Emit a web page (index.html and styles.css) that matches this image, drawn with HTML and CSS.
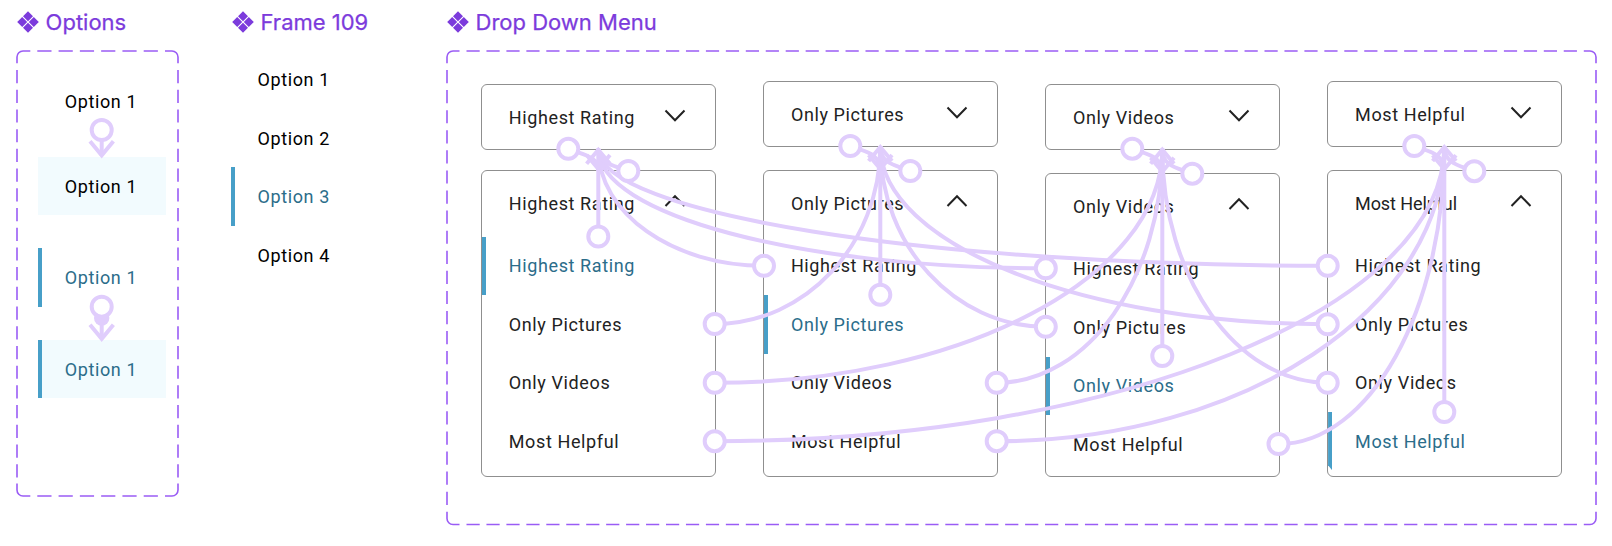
FILE: index.html
```html
<!DOCTYPE html>
<html lang="en">
<head>
<meta charset="utf-8">
<title>Drop Down Menu components</title>
<link rel="stylesheet" href="styles.css">
</head>
<body>
<svg class="defs" width="0" height="0">
  <symbol id="component" viewBox="0 0 22 22"><path d="M11 .2l5 5-5 5-5-5zM11 11.8l5 5-5 5-5-5zM5.2 6l5 5-5 5-5-5zM16.8 6l5 5-5 5-5-5z"/></symbol>
  <symbol id="down" viewBox="0 0 22 14"><path d="M1.5 1.5L11 11.3L20.5 1.5"/></symbol>
  <symbol id="up" viewBox="0 0 22 14"><path d="M1.5 12L11 2.2L20.5 12"/></symbol>
</svg>
<main class="canvas">
  <section class="set set-options">
    <h2 class="title"><svg class="mark"><use href="#component"/></svg>Options</h2>
    <div class="frame frame-options">
      <svg class="dashes" width="164" height="448">
        <path d="M1 13.3V7a6 6 0 0 1 6-6h7.3M149 1h7a6 6 0 0 1 6 6v6.3M162 433.5v6.5a6 6 0 0 1-6 6h-7M14.3 446H7a6 6 0 0 1-6-6v-6.5"/>
        <path class="dash-h" d="M21.3 1H148M21.3 446H148"/>
        <path class="dash-v" d="M1 20V433M162 20V433"/>
      </svg>
      <div class="option">Option 1</div>
      <div class="option hover gap-a">Option 1</div>
      <div class="option selected gap-b">Option 1</div>
      <div class="option selected hover gap-b">Option 1</div>
    </div>
  </section>

  <section class="set set-list">
    <h2 class="title"><svg class="mark"><use href="#component"/></svg>Frame 109</h2>
    <div class="list">
      <div class="option">Option 1</div>
      <div class="option">Option 2</div>
      <div class="option selected">Option 3</div>
      <div class="option">Option 4</div>
    </div>
  </section>

  <section class="set set-menus">
    <h2 class="title"><svg class="mark"><use href="#component"/></svg>Drop Down Menu</h2>
    <div class="frame frame-menus">
      <svg class="dashes" width="1152" height="476">
        <path d="M1 13.3V7a6 6 0 0 1 6-6h6.5M1137.8 1h6.2a6 6 0 0 1 6 6v6.3M1150 461.7v6.8a6 6 0 0 1-6 6h-6.2M13.5 474.5H7a6 6 0 0 1-6-6v-6.8"/>
        <path class="dash-wide" d="M20.5 1H1137M20.5 474.5H1137"/>
        <path class="dash-tall" d="M1 20V461M1150 20V461"/>
      </svg>
      <div class="column low">
        <div class="card head">Highest Rating<svg class="chev"><use href="#down"/></svg></div>
        <div class="card menu">
          <div class="head">Highest Rating<svg class="chev"><use href="#up"/></svg></div>
          <div class="item selected">Highest Rating</div>
          <div class="item">Only Pictures</div>
          <div class="item">Only Videos</div>
          <div class="item">Most Helpful</div>
        </div>
      </div>
      <div class="column">
        <div class="card head">Only Pictures<svg class="chev"><use href="#down"/></svg></div>
        <div class="card menu">
          <div class="head">Only Pictures<svg class="chev"><use href="#up"/></svg></div>
          <div class="item">Highest Rating</div>
          <div class="item selected">Only Pictures</div>
          <div class="item">Only Videos</div>
          <div class="item">Most Helpful</div>
        </div>
      </div>
      <div class="column low far">
        <div class="card head">Only Videos<svg class="chev"><use href="#down"/></svg></div>
        <div class="card menu">
          <div class="head">Only Videos<svg class="chev"><use href="#up"/></svg></div>
          <div class="item">Highest Rating</div>
          <div class="item">Only Pictures</div>
          <div class="item selected">Only Videos</div>
          <div class="item">Most Helpful</div>
        </div>
      </div>
      <div class="column">
        <div class="card head">Most Helpful<svg class="chev"><use href="#down"/></svg></div>
        <div class="card menu">
          <div class="head tight">Most Helpful<svg class="chev"><use href="#up"/></svg></div>
          <div class="item">Highest Rating</div>
          <div class="item">Only Pictures</div>
          <div class="item">Only Videos</div>
          <div class="item selected last">Most Helpful</div>
        </div>
      </div>
    </div>
  </section>
  <svg class="wires" id="wires" width="1612" height="546"></svg>
</main>
<script src="wires.js"></script>
</body>
</html>
```
FILE: wires.js
```js
// Prototype connections drawn over the component sets.
var K = 0.55;
var lines = '', nodes = '';

function node(x, y) {
  nodes += '<circle cx="' + x + '" cy="' + y + '" r="10"/>';
}
function line(d) {
  lines += '<path d="' + d + '"/>';
}
// Arrow head at (x, y); dir 1 points down, -1 points up.
function head(x, y, dir) {
  line('M' + (x - 11.7) + ' ' + (y - 16 * dir) + 'L' + x + ' ' + (y - 2 * dir) + 'L' + (x + 11.7) + ' ' + (y - 16 * dir));
}
// Leaves a side node horizontally and arrives at the tip vertically.
function curve(x, y, tx, ty) {
  line('M' + x + ' ' + y + 'C' + (x + (tx - x) * K) + ' ' + y + ' ' + tx + ' ' + (ty + (y - ty) * K) + ' ' + tx + ' ' + ty);
  node(x, y);
}

// Options
line('M101.7 130V156');
head(101.7, 157.3, 1);
node(101.7, 130);
line('M101.7 307V339');
head(101.7, 340.8, 1);
lines += '<circle class="dot" cx="101.7" cy="318" r="7.7"/>';
node(101.7, 306.7);

// Menus: closed card bottom, open card top, selected row top, side nodes
[
  { x: 598.3, a: 148.8, b: 171, v: 236.5, s: [[764, 265.8], [1045.8, 268.3], [1327.7, 265.8]] },
  { x: 880.3, a: 146, b: 171, v: 294.8, s: [[714.7, 324], [1045.8, 326.8], [1327.7, 324.3]] },
  { x: 1162.3, a: 148.7, b: 173.7, v: 356, s: [[714.7, 382.8], [996.7, 382.8], [1327.7, 382.8]] },
  { x: 1444.3, a: 146, b: 171.2, v: 412, s: [[714.7, 441.2], [996.7, 441.2], [1278.5, 444]] }
].forEach(function (m) {
  m.s.forEach(function (p) { curve(p[0], p[1], m.x, m.a); });
  line('M' + m.x + ' ' + m.v + 'V' + m.a);
  head(m.x, m.a - 1, -1);
  head(m.x, m.b, 1);
  line('M' + (m.x - 30) + ' ' + m.a + 'C' + (m.x - 15) + ' ' + (m.a + 6) + ' ' + m.x + ' ' + (m.a + 7) + ' ' + m.x + ' ' + m.b);
  line('M' + (m.x + 30) + ' ' + m.b + 'C' + (m.x + 15) + ' ' + (m.b - 6) + ' ' + m.x + ' ' + (m.b - 7) + ' ' + m.x + ' ' + m.a);
  node(m.x, m.v);
  node(m.x - 30, m.a);
  node(m.x + 30, m.b);
});

document.getElementById('wires').innerHTML = lines + nodes;
```
FILE: styles.css
```css
* { box-sizing: border-box; }
body {
  margin: 0;
  background: #fff;
  font: 400 18px/22px Roboto, "Liberation Sans", sans-serif;
  letter-spacing: .61px;
  color: #222;
}
.defs { position: absolute; }
.canvas {
  position: relative;
  display: flex;
  width: 1612px;
  height: 546px;
  overflow: hidden;
}
.set { flex: none; }
.set-options { margin-left: 16px; width: 164px; }
.set-list { margin-left: 50.5px; width: 170px; }
.set-menus { margin-left: 45px; width: 1152px; }
.title {
  display: flex;
  align-items: center;
  gap: 7px;
  height: 50px;
  margin: 0;
  padding-bottom: 6px;
  font: 400 22px/28px Inter, sans-serif;
  letter-spacing: 0;
  color: #7c3bdc;
  -webkit-text-stroke: .25px #7c3bdc;
  white-space: nowrap;
}
.mark { width: 22px; height: 22px; fill: #7c3bdc; }
.set-options .title { padding-left: .6px; }
.set-list .title { padding-left: 1px; }
.set-menus .title { padding-left: 1px; }

.frame { position: relative; }
.frame-options { height: 448px; padding: 22px 14.5px 0 21.7px; }
.frame-menus { display: flex; gap: 47.1px; height: 476px; padding: 31px 0 0 35.3px; }
.dashes { position: absolute; left: 0; top: 0; fill: none; stroke: #9a5cf5; stroke-width: 1.6; }
.dash-h { stroke-dasharray: 14.2 7.08; }
.dash-v { stroke-dasharray: 13.2 6.51; }
.dash-wide { stroke-dasharray: 13.2 6.75; }
.dash-tall { stroke-dasharray: 13.2 6.88; }

.option {
  position: relative;
  display: flex;
  align-items: center;
  height: 58.5px;
  padding: 2px 0 0 27px;
  color: #000;
}
.hover { background: #f2fbfe; }
.gap-a { margin-top: 26.2px; }
.gap-b { margin-top: 33px; }
.selected { color: #2b6d8a; }
.selected::before {
  content: "";
  position: absolute;
  left: 0;
  top: 0;
  bottom: 0;
  width: 4.3px;
  background: #479fc8;
}

.column { width: 235px; flex: none; display: flex; flex-direction: column; gap: 23px; }
.column.low { padding-top: 3px; gap: 20px; }
.column.far { gap: 23px; }
.card { border: 1px solid #8f8f8f; border-radius: 6px; }
.head {
  display: flex;
  align-items: center;
  justify-content: space-between;
  height: 65.5px;
  flex: none;
  padding: 0 29px 0 27px;
}
.card.head { height: 66px; padding-top: 2px; }
.menu { height: 307px; }
.far .menu { height: 304px; }
.tight { letter-spacing: -.1px; }
.chev { width: 22px; height: 14px; margin-top: -4px; fill: none; stroke: #222; stroke-width: 2; }
.menu .chev { margin-top: -6px; }
.item { position: relative; display: flex; align-items: center; height: 58.5px; padding: 1px 0 0 27px; }
.last::before { clip-path: polygon(0 0, 100% 0, 100% 100%, 0 91%); }

.wires { position: absolute; left: 0; top: 0; fill: none; stroke: #e0cdfc; stroke-width: 4; }
.wires circle { fill: #fff; }
.wires .dot { fill: #e0cdfc; stroke: none; }
```
